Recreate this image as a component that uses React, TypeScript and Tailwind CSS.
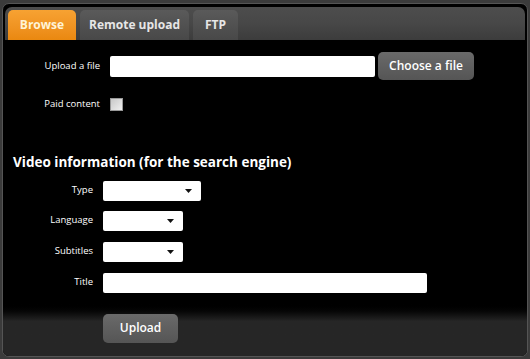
import React from "react";

const font = { fontFamily: '"Open Sans", "Noto Sans", sans-serif' };

function Select({ w }: { w: string }) {
  return (
    <div className={`${w} h-[20px] bg-white rounded-[2px] flex items-center justify-end pr-[9px]`}>
      <svg width="7" height="4" viewBox="0 0 7 4"><path d="M0 0h7L3.5 4z" fill="#111" /></svg>
    </div>
  );
}

export default function App() {
  return (
    <div style={font} className="w-[530px] h-[359px] bg-[#3b3b3b] pt-[3px] px-[2px] pb-[2px]">
      <div className="h-full rounded-[7px] bg-black border border-[#555] flex flex-col overflow-hidden">
        {/* tab bar */}
        <div className="mx-[2px] mt-[3px] h-[33px] rounded-t-[7px] bg-gradient-to-b from-[#4d4d4d] via-[#474747] to-[#3c3c3c] flex items-end pl-[3px] gap-[4px]">
          <div className="w-[68px] h-[30px] rounded-t-[5px] bg-gradient-to-b from-[#f7a232] to-[#ea880f] text-[#fff3d6] text-[12px] font-bold flex items-center justify-center">Browse</div>
          <div className="w-[109px] h-[30px] rounded-t-[5px] bg-gradient-to-b from-[#5a5a5a] to-[#484848] text-[#e6e6e6] text-[12px] font-bold flex items-center justify-center">Remote upload</div>
          <div className="w-[45px] h-[30px] rounded-t-[5px] bg-gradient-to-b from-[#5a5a5a] to-[#484848] text-[#e6e6e6] text-[12px] font-bold flex items-center justify-center">FTP</div>
        </div>
        {/* content */}
        <div className="flex-1 flex flex-col bg-gradient-to-b from-black from-[83%] to-[#262626] to-[89%] text-white">
          <div className="flex items-center mt-[12px]">
            <div className="w-[97px] text-right text-[9.5px]">Upload a file</div>
            <div className="ml-[10px] w-[265px] h-[21px] bg-white rounded-[2px]" />
            <div className="ml-[3px] w-[96px] h-[28px] rounded-[5px] bg-gradient-to-b from-[#6a6a6a] to-[#555] text-[12px] font-semibold flex items-center justify-center">Choose a file</div>
          </div>
          <div className="flex items-center mt-[17px]">
            <div className="w-[97px] text-right text-[9.5px]">Paid content</div>
            <div className="ml-[10px] w-[13px] h-[13px] bg-gradient-to-br from-[#c8c8c8] to-[#f0f0f0] border border-[#999]" />
          </div>
          <div className="ml-[10px] mt-[41px] text-[13.5px] font-bold">Video information (for the search engine)</div>
          <div className="flex items-center mt-[8px]">
            <div className="w-[90px] text-right text-[9.5px]">Type</div>
            <div className="ml-[10px]"><Select w="w-[98px]" /></div>
          </div>
          <div className="flex items-center mt-[10px]">
            <div className="w-[90px] text-right text-[9.5px]">Language</div>
            <div className="ml-[10px]"><Select w="w-[80px]" /></div>
          </div>
          <div className="flex items-center mt-[11px]">
            <div className="w-[90px] text-right text-[9.5px]">Subtitles</div>
            <div className="ml-[10px]"><Select w="w-[80px]" /></div>
          </div>
          <div className="flex items-center mt-[11px]">
            <div className="w-[90px] text-right text-[9.5px]">Title</div>
            <div className="ml-[10px] w-[324px] h-[20px] bg-white rounded-[2px]" />
          </div>
          <div className="ml-[100px] mt-[21px] w-[75px] h-[29px] rounded-[5px] bg-gradient-to-b from-[#6a6a6a] to-[#555] text-[12px] font-semibold flex items-center justify-center">Upload</div>
        </div>
      </div>
    </div>
  );
}
